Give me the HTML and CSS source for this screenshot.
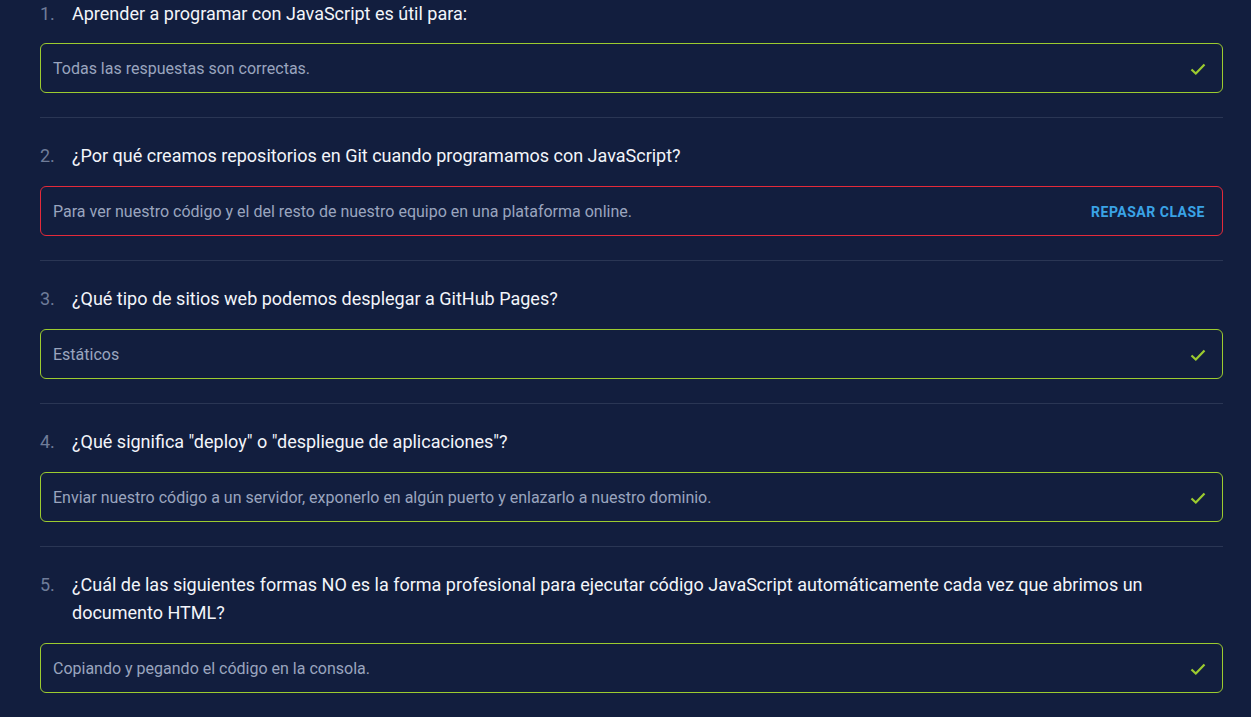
FILE: index.html
```html
<!DOCTYPE html>
<html lang="es">
<head>
<meta charset="utf-8">
<title>Resultados</title>
<link rel="stylesheet" href="styles.css">
</head>
<body>
<main class="quiz">
  <section class="item">
    <div class="question"><span class="num">1.</span><span class="qtext">Aprender a programar con JavaScript es útil para:</span></div>
    <div class="answer correct"><span class="atext">Todas las respuestas son correctas.</span><svg class="check" viewBox="0 0 16 12" width="16" height="12"><path d="M1.5 6.5 L5.8 10.5 L14.5 1.5" fill="none" stroke="#9ccb2f" stroke-width="2.2"/></svg></div>
  </section>
  <section class="item">
    <div class="question"><span class="num">2.</span><span class="qtext">¿Por qué creamos repositorios en Git cuando programamos con JavaScript?</span></div>
    <div class="answer wrong"><span class="atext">Para ver nuestro código y el del resto de nuestro equipo en una plataforma online.</span><a class="review" href="#">REPASAR CLASE</a></div>
  </section>
  <section class="item">
    <div class="question"><span class="num">3.</span><span class="qtext">¿Qué tipo de sitios web podemos desplegar a GitHub Pages?</span></div>
    <div class="answer correct"><span class="atext">Estáticos</span><svg class="check" viewBox="0 0 16 12" width="16" height="12"><path d="M1.5 6.5 L5.8 10.5 L14.5 1.5" fill="none" stroke="#9ccb2f" stroke-width="2.2"/></svg></div>
  </section>
  <section class="item">
    <div class="question"><span class="num">4.</span><span class="qtext">¿Qué significa "deploy" o "despliegue de aplicaciones"?</span></div>
    <div class="answer correct"><span class="atext">Enviar nuestro código a un servidor, exponerlo en algún puerto y enlazarlo a nuestro dominio.</span><svg class="check" viewBox="0 0 16 12" width="16" height="12"><path d="M1.5 6.5 L5.8 10.5 L14.5 1.5" fill="none" stroke="#9ccb2f" stroke-width="2.2"/></svg></div>
  </section>
  <section class="item">
    <div class="question"><span class="num">5.</span><span class="qtext">¿Cuál de las siguientes formas NO es la forma profesional para ejecutar código JavaScript automáticamente cada vez que abrimos un documento HTML?</span></div>
    <div class="answer correct"><span class="atext">Copiando y pegando el código en la consola.</span><svg class="check" viewBox="0 0 16 12" width="16" height="12"><path d="M1.5 6.5 L5.8 10.5 L14.5 1.5" fill="none" stroke="#9ccb2f" stroke-width="2.2"/></svg></div>
  </section>
</main>
</body>
</html>
```

FILE: styles.css
```css
* { box-sizing: border-box; }
html, body {
  margin: 0;
  background: #121e3e;
}
body {
  font-family: Roboto, "Noto Sans", "Liberation Sans", sans-serif;
  color: #eef1f7;
  overflow: hidden;
}
.quiz {
  padding: 0 28px 0 40px;
}
.item {
  padding: 24px 0 24px;
  border-bottom: 1px solid #2a3654;
}
.item:first-child {
  padding-top: 0;
}
.question {
  display: flex;
  font-size: 18px;
  line-height: 28px;
  margin-bottom: 16px;
  padding-right: 40px;
}
.item:first-child .question { margin-bottom: 15px; }
.num {
  flex: 0 0 32px;
  color: #6f7c99;
}
.qtext {
  color: #f3f5fa;
}
.answer {
  display: flex;
  align-items: center;
  justify-content: space-between;
  height: 50px;
  padding: 0 16px 0 12px;
  border: 1px solid #9ccb2f;
  border-radius: 6px;
  font-size: 16px;
  color: #9aa5be;
}
.answer.wrong {
  border-color: #e42a3a;
  padding-right: 17px;
}
.check {
  display: block;
  margin-top: 1px;
}
.review {
  color: #3aa3e6;
  font-weight: 700;
  font-size: 14px;
  letter-spacing: 0.5px;
  text-decoration: none;
  margin-top: 2px;
}
```
